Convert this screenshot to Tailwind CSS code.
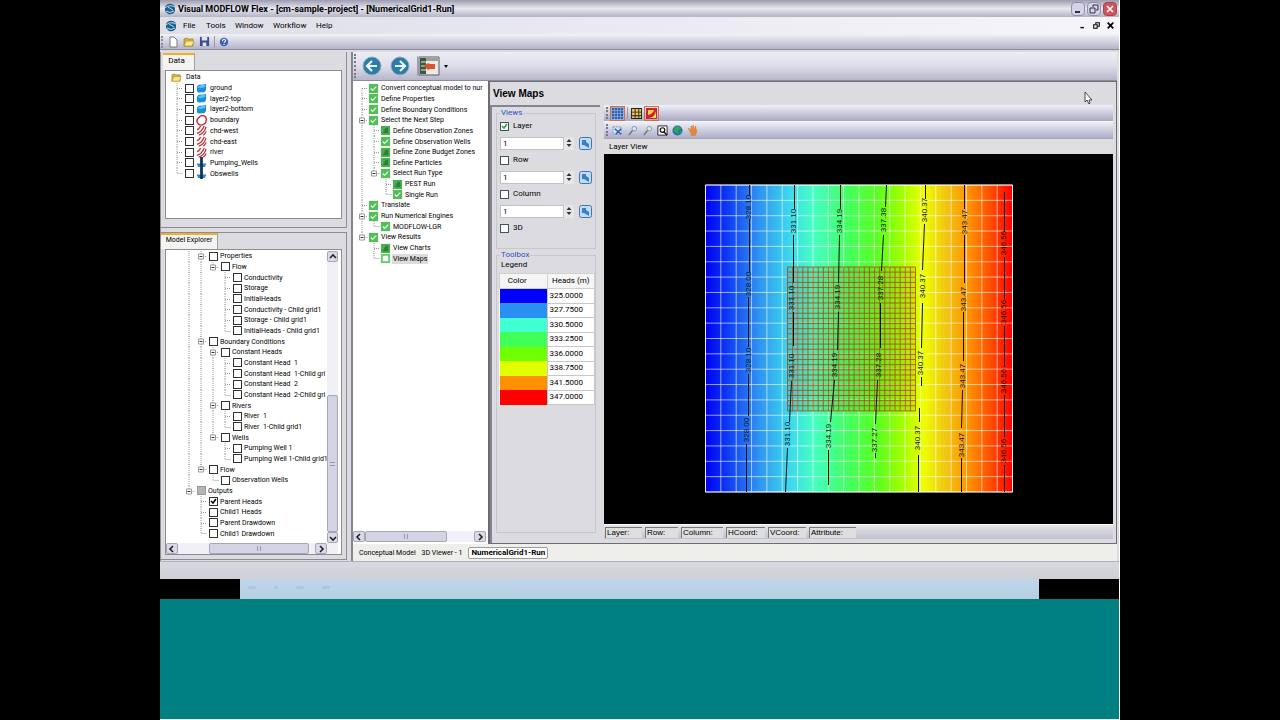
<!DOCTYPE html>
<html lang="en">
<head>
<meta charset="utf-8">
<title>Visual MODFLOW Flex</title>
<script src="https://cdn.jsdelivr.net/npm/@tailwindcss/browser@4"></script>
</head>
<body class="flex min-h-screen flex-col bg-black px-40 font-['Roboto',sans-serif] text-[8px] leading-[10px] text-black">

<svg class="hidden" aria-hidden="true">
  <defs>
    <symbol id="globe" viewBox="0 0 12 12"><path d="M1 4Q3 0 8 1l3 2v5Q9 12 4 11L1 8z" fill="#1d608c"/><path d="M1 5Q5 1 11 4M2 8q4 3 8 0M4 4l5 3" stroke="#b5dcec" fill="none"/></symbol>
    <symbol id="folder" viewBox="0 0 12 12"><path d="M1 3l3-1 1 1h5v7H1z" fill="#dfb33a" stroke="#8a7020" stroke-width=".6"/><path d="M3 5h8L9 10H1z" fill="#ffe984" stroke="#a08530" stroke-width=".6"/></symbol>
    <symbol id="surface" viewBox="0 0 12 12"><path d="M1 4Q3 1 6 2l5-1v6q-1 4-5 3Q2 11 1 9z" fill="#1a8edc"/><path d="M2 4q3-2 8-2v2Q6 6 2 5z" fill="#5cc3f5"/></symbol>
    <symbol id="ring" viewBox="0 0 12 12"><path d="M4 2Q6 0 9 1q3 2 2 5 0 4-5 5-4 0-5-4 0-3 3-5z" fill="#fff" stroke="#c22d35" stroke-width="1.500"/></symbol>
    <symbol id="stripes" viewBox="0 0 12 12"><path d="M1 5q2 0 4-4M1 9q5-1 8-8M3 11q6-2 8-9M8 11q2-1 3-4" fill="none" stroke="#bd3038" stroke-width="1.400"/></symbol>
    <symbol id="well" viewBox="0 0 12 12"><path d="M1 8h10M2 10h8" stroke="#2b8bd0" stroke-width="2"/><path d="M6 0v12" stroke="#16304c" stroke-width="3"/></symbol>
    <symbol id="done" viewBox="0 0 12 12"><path d="M1 1h10v10H1z" fill="#55bd5a"/><path d="M3 6l2 2 4-4" fill="none" stroke="#e2ffe0" stroke-width="1.300"/></symbol>
    <symbol id="todo" viewBox="0 0 12 12"><path d="M1 1h10v10H1z" fill="#4fae54"/><path d="M6 3h3v6H3z" fill="#2a8436"/></symbol>
    <symbol id="current" viewBox="0 0 12 12"><path d="M1 1h10v10H1z" fill="#66c86b"/><path d="M3 3h6v6H3z" fill="#f4fff2"/></symbol>
  </defs>
</svg>

<div class="flex grow flex-col border-r border-white bg-[#dcdce0]">
  <header>
    <div class="flex h-[17px] items-center bg-linear-to-b from-[#9c9cb0] via-[#e8e8f0] to-[#b4b4c6] pr-[2px] pl-1">
      <svg class="size-3"><use href="#globe"/></svg>
      <h1 class="grow pl-[2px] text-[9px] font-bold">Visual MODFLOW Flex - [cm-sample-project] - [NumericalGrid1-Run]</h1>
      <div class="flex gap-[2px]">
        <button aria-label="Minimize" class="flex size-[14px] items-center justify-center rounded-sm border border-[#8f8fae] bg-[#d4d4e6]"><svg viewBox="0 0 10 10" class="size-[10px]"><path d="M2 8h5" stroke="#303048" stroke-width="2"/></svg></button>
        <button aria-label="Restore" class="flex size-[14px] items-center justify-center rounded-sm border border-[#8f8fae] bg-[#d4d4e6]"><svg viewBox="0 0 10 10" class="size-[10px]"><path d="M4 3V1h5v5H7M1 4h5v5H1z" fill="none" stroke="#303048"/></svg></button>
        <button aria-label="Close" class="flex size-[14px] items-center justify-center rounded-sm border border-[#a04850] bg-[#d4545a]"><svg viewBox="0 0 10 10" class="size-[10px]"><path d="M2 2l6 6M8 2L2 8" stroke="#fff" stroke-width="1.600"/></svg></button>
      </div>
    </div>
    <nav class="flex h-[17px] items-center bg-linear-to-r from-[#dedee6] to-[#f6f6fa] pr-1 pl-[5px]">
      <svg class="mr-[6px] size-3"><use href="#globe"/></svg>
      <button class="w-[23px] text-left">File</button><button class="w-[29px] text-left">Tools</button><button class="w-[38px] text-left">Window</button><button class="w-[43px] text-left">Workflow</button><button class="grow text-left">Help</button>
      <button aria-label="Minimize document" class="w-[14px]"><svg viewBox="0 0 10 10" class="size-[7px]"><path d="M2 8h5" stroke="#000" stroke-width="2"/></svg></button>
      <button aria-label="Restore document" class="w-[14px]"><svg viewBox="0 0 10 10" class="size-[7px]"><path d="M4 3V1h5v5H7M1 4h5v5H1z" fill="none" stroke="#000" stroke-width="1.500"/></svg></button>
      <button aria-label="Close document" class="w-[8px]"><svg viewBox="0 0 10 10" class="size-[7px]"><path d="M1 1l8 8M9 1L1 9" stroke="#000" stroke-width="2.400"/></svg></button>
    </nav>
    <div class="flex h-4 items-center gap-[4px] border-b border-[#8c8ca0] bg-linear-to-b from-[#f2f2f8] to-[#b4b4ca] pl-px">
      <span class="h-3 border-l-2 border-dotted border-[#8a8a9c]"></span>
      <button aria-label="New"><svg viewBox="0 0 12 12" class="size-3"><path d="M3 1h4l3 3v7H3z" fill="#fff" stroke="#77778a"/></svg></button>
      <button aria-label="Open"><svg class="size-3"><use href="#folder"/></svg></button>
      <button aria-label="Save"><svg viewBox="0 0 12 12" class="size-[11px]"><path d="M1 1h10v10H1z" fill="#3e4a86"/><path d="M3 1h6v4H3zM4 7h4v4H4z" fill="#dfe5f5"/></svg></button>
      <span class="h-3 border-l border-[#9a9ab0]"></span>
      <button aria-label="Help"><svg viewBox="0 0 12 12" class="size-[10px]"><circle cx="6" cy="6" r="5" fill="#3c62b8"/><path d="M4 5q0-2 2-2t2 1.500q0 1-2 2M6 8v1.500" fill="none" stroke="#fff" stroke-width="1.300"/></svg></button>
    </div>
  </header>

  <main class="flex gap-1 border-b border-[#b0b0b4] pt-[2px]">
    <div class="flex w-[187px] shrink-0 flex-col gap-1 border-l border-[#8a8a90]">
      <section class="border-r border-b border-[#8c8c96]">
        <h2 class="flex h-[18px] pt-px"><button class="ml-[2px] w-[32px] border-t-2 border-r border-t-[#efb02c] border-r-[#a0a0a8] bg-[#f3f3f1] pr-1 pb-1">Data</button></h2>
        <div class="mx-1 mb-2 h-[149px] border border-[#8c8c94] bg-white pt-px pl-[5px] text-[7px]" id="data-tree"></div>
      </section>
      <section class="border-t border-r border-b border-[#8c8c96]">
        <h2 class="flex h-4"><button class="w-[57px] border-t-2 border-r border-t-[#efb02c] border-r-[#a0a0a8] bg-[#f3f3f1] pb-1 text-[7px] whitespace-nowrap">Model Explorer</button></h2>
        <div class="mx-1 mb-1 border border-[#8c8c94] bg-white pt-px pr-[3px]">
          <div class="flex">
            <div class="min-w-0 grow overflow-hidden pb-[4px] pl-[17px] text-[7px]" id="model-tree"></div>
            <div class="flex w-[11px] shrink-0 flex-col bg-[#f0f0f6]">
              <button aria-label="Scroll up" class="flex h-[11px] items-center justify-center rounded-xs border border-[#a6a6ba] bg-[#d9d9e8]"><svg viewBox="0 0 8 8" class="size-2"><path d="M1 5l3-3 3 3" fill="none" stroke="#222" stroke-width="1.600"/></svg></button>
              <div class="h-[133px]"></div>
              <div class="flex grow items-center justify-center rounded-xs border border-[#a6a6ba] bg-[#d3d3e4]"><span class="h-1 w-[5px] border-y border-[#9898b0]"></span></div>
              <button aria-label="Scroll down" class="flex h-[11px] items-center justify-center rounded-xs border border-[#a6a6ba] bg-[#d9d9e8]"><svg viewBox="0 0 8 8" class="size-2"><path d="M1 3l3 3 3-3" fill="none" stroke="#222" stroke-width="1.600"/></svg></button>
            </div>
          </div>
          <div class="flex h-[11px] bg-[#f0f0f6] pr-[11px]">
            <button aria-label="Scroll left" class="flex w-[12px] items-center justify-center rounded-xs border border-[#a6a6ba] bg-[#d9d9e8]"><svg viewBox="0 0 8 8" class="size-2"><path d="M5 1L2 4l3 3" fill="none" stroke="#222" stroke-width="1.600"/></svg></button>
            <div class="w-[31px]"></div>
            <div class="flex w-[100px] items-center justify-center rounded-xs border border-[#a6a6ba] bg-[#d3d3e4]"><span class="h-[5px] w-1 border-x border-[#9898b0]"></span></div>
            <div class="grow"></div>
            <button aria-label="Scroll right" class="flex w-[12px] items-center justify-center rounded-xs border border-[#a6a6ba] bg-[#d9d9e8]"><svg viewBox="0 0 8 8" class="size-2"><path d="M3 1l3 3-3 3" fill="none" stroke="#222" stroke-width="1.600"/></svg></button>
          </div>
        </div>
      </section>
    </div>

    <div class="flex min-w-0 grow flex-col border-l-2 border-[#85858f] pr-[2px]">
      <div class="flex h-[29px] items-center border-b border-[#8c8c9e] bg-linear-to-b from-[#ededf5] via-[#dedeea] to-[#b6b6ca] pl-px">
        <span class="h-6 border-l-2 border-dotted border-[#77778a]"></span>
        <button aria-label="Back" class="ml-[6px]"><svg viewBox="0 0 20 20" class="size-5"><circle cx="10" cy="10" r="9" fill="#2e7ba6" stroke="#8faebf"/><path d="M15 10H6M10 5l-5 5 5 5" fill="none" stroke="#e8f8ff" stroke-width="2.200"/></svg></button>
        <button aria-label="Forward" class="ml-[8px]"><svg viewBox="0 0 20 20" class="size-5"><circle cx="10" cy="10" r="9" fill="#2e7ba6" stroke="#8faebf"/><path d="M5 10h9M10 5l5 5-5 5" fill="none" stroke="#e8f8ff" stroke-width="2.200"/></svg></button>
        <button aria-label="Workflow view" class="ml-[7px] border-l border-[#a0a0b4]"><svg viewBox="0 0 22 20" class="h-5 w-[22px]"><path d="M1 1h20v18H1z" fill="#ecebe8" stroke="#5a5a60"/><path d="M2 2h6v16H2z" fill="#46504a"/><path d="M8 2h12v3H8z" fill="#9aa0a0"/><path d="M3 6h5M3 10h5M3 14h5" stroke="#8ed08c" stroke-width="1.500"/><path d="M6 10l4-3 2 1h5v5h-5l-2 1z" fill="#dd5330"/></svg></button>
        <span class="ml-[4px] border-x-2 border-t-[3px] border-x-transparent border-t-black"></span>
      </div>

      <div class="flex">
        <aside class="flex w-[135px] shrink-0 flex-col bg-white pr-[2px]">
          <div class="grow overflow-hidden pt-[2px] pl-[3px] text-[7px]" id="steps-tree"></div>
          <div class="flex h-[11px] bg-[#f0f0f6]">
            <button aria-label="Scroll left" class="flex w-[12px] items-center justify-center rounded-xs border border-[#a6a6ba] bg-[#d9d9e8]"><svg viewBox="0 0 8 8" class="size-2"><path d="M5 1L2 4l3 3" fill="none" stroke="#222" stroke-width="1.600"/></svg></button>
            <div class="flex w-[82px] items-center justify-center rounded-xs border border-[#a6a6ba] bg-[#d3d3e4]"><span class="h-[5px] w-1 border-x border-[#9898b0]"></span></div>
            <div class="grow"></div>
            <button aria-label="Scroll right" class="flex w-[12px] items-center justify-center rounded-xs border border-[#a6a6ba] bg-[#d9d9e8]"><svg viewBox="0 0 8 8" class="size-2"><path d="M3 1l3 3-3 3" fill="none" stroke="#222" stroke-width="1.600"/></svg></button>
          </div>
          <div class="h-[2px]"></div>
        </aside>

        <section class="flex min-w-0 grow flex-col border-t border-r border-b border-l-2 border-[#6c6c74] pr-[3px]">
          <h2 class="h-[23px] pt-[7px] pl-[3px] font-['Liberation_Sans',Arial,sans-serif] text-[10px] font-bold">View Maps</h2>
          <div class="flex grow gap-1">
            <div class="w-[110px] shrink-0 border-t-2 border-l-2 border-[#85858f] pt-px pr-1 pl-1">
              <fieldset class="h-[141px] min-w-0 border border-[#c6c6cc] px-[3px] leading-[10px]" id="views">
                <legend class="px-px text-[#2c50c0]">Views</legend>
              </fieldset>
              <fieldset class="mt-px h-[283px] min-w-0 border border-[#c6c6cc] pl-[2px]">
                <legend class="ml-px px-px text-[#2c50c0]">Toolbox</legend>
                <p class="pl-[2px]">Legend</p>
                <table class="mt-[3px] h-[132px] w-full border-collapse bg-white">
                  <thead><tr class="h-[15px] bg-[#f5f5f5]"><th class="w-1/2 border border-[#d0d0d4] p-0 pr-3 font-normal">Color</th><th class="border border-[#d0d0d4] p-0 font-normal whitespace-nowrap">Heads (m)</th></tr></thead>
                  <tbody id="legend"></tbody>
                </table>
              </fieldset>
            </div>
            <div class="flex min-w-0 grow flex-col">
              <div class="flex h-4 items-center bg-linear-to-b from-[#f0f0f8] to-[#a9a9c4] pl-[2px]">
                <span class="h-3 border-l-2 border-dotted border-[#77778a]"></span>
                <button aria-label="Show grid" class="ml-[2px] border border-[#cc7346] bg-[#9cabd0] p-px"><svg viewBox="0 0 11 11" class="size-[11px]"><path d="M0 0h11v11H0z" fill="#2f5fae"/><path d="M2.500 0v11M5.500 0v11M8.500 0v11M0 2.500h11M0 5.500h11M0 8.500h11" stroke="#8fb2e6" stroke-width=".7"/></svg></button>
                <span class="ml-[2px] h-3 border-l border-[#9a9ab0]"></span>
                <button aria-label="Show cells" class="ml-[3px]"><svg viewBox="0 0 12 12" class="size-[11px]"><path d="M0 0h12v12H0z" fill="#29241a"/><path d="M1 1h3v3H1zM5 1h3v3H5zM9 1h2v3H9zM1 5h3v3H1zM5 5h3v3H5zM9 5h2v3H9zM1 9h3v2H1zM5 9h3v2H5zM9 9h2v2H9z" fill="#eac35a"/></svg></button>
                <button aria-label="Colour map" class="ml-[2px] border border-[#cc7346] p-px"><svg viewBox="0 0 11 11" class="size-[11px]"><path d="M0 0h11v11H0z" fill="#d02038"/><path d="M2 2h6Q7 6 2 7z" fill="#f7d83c"/><path d="M3 10Q9 9 10 3v7z" fill="#f7e23c"/></svg></button>
              </div>
              <div class="flex h-[17px] items-center gap-[4px] border-t border-[#f6f6fa] bg-linear-to-b from-[#f0f0f8] to-[#adadc8] pl-[2px]">
                <span class="h-3 border-l-2 border-dotted border-[#77778a]"></span>
                <button aria-label="Zoom box"><svg viewBox="0 0 12 12" class="size-[11px]"><path d="M1 2h9v8H1z" fill="#d3e2f4" stroke="#7c94b8" stroke-dasharray="2 1"/><path d="M3 4l7 6M10 4l-6 6" stroke="#245ba6" stroke-width="1.500"/></svg></button>
                <button aria-label="Zoom in"><svg viewBox="0 0 12 12" class="size-[11px]"><circle cx="8" cy="4" r="2.500" fill="#d6e6f5" stroke="#7d93b0"/><path d="M6 6l-4 5" stroke="#7b6d64" stroke-width="1.500"/></svg></button>
                <button aria-label="Zoom out"><svg viewBox="0 0 12 12" class="size-[11px]"><circle cx="8" cy="4" r="2.500" fill="#d4efd8" stroke="#7d9aa0"/><path d="M6 6l-4 5" stroke="#7b6d64" stroke-width="1.500"/></svg></button>
                <button aria-label="Zoom extents"><svg viewBox="0 0 12 12" class="size-[11px]"><path d="M1 1h10v10H1z" fill="#fff" stroke="#222"/><circle cx="6" cy="5.500" r="2.500" fill="none" stroke="#111" stroke-width="1.300"/><path d="M7 7l4 4" stroke="#111" stroke-width="1.600"/></svg></button>
                <button aria-label="Full view"><svg viewBox="0 0 12 12" class="size-[11px]"><circle cx="6" cy="6" r="5.500" fill="#256fa8"/><path d="M3 2l4-1 3 3-3 2v4L2 7zM8 7l3-1-2 4z" fill="#2fa65a"/></svg></button>
                <button aria-label="Pan"><svg viewBox="0 0 12 12" class="size-[11px]"><path d="M3 7L1 4l1-1 2 2V1h1.500v3L6 0h1.500v4L9 1h1v4l1-1v4l-2 4H5z" fill="#dd8741"/></svg></button>
              </div>
              <h3 class="flex h-4 items-center border-t border-[#a8a8ac] bg-[#dedee0] pl-[5px]">Layer View</h3>
              <div class="grow bg-black"><svg id="map" viewBox="604 154 508 370" class="h-[370px] w-full"></svg></div>
              <div class="flex h-[15px] items-center gap-[3px] border-t border-white bg-linear-to-b from-[#e4e4ea] to-[#c2c2d0] pl-px font-['Liberation_Sans',Arial,sans-serif] whitespace-nowrap">
                <span class="w-[37px] border-t border-l border-[#77777c] bg-[#dededf] pl-px">Layer:</span>
                <span class="w-[33px] border-t border-l border-[#77777c] bg-[#dededf] pl-px">Row:</span>
                <span class="w-[42px] border-t border-l border-[#77777c] bg-[#dededf] pl-px">Column:</span>
                <span class="w-[39px] border-t border-l border-[#77777c] bg-[#dededf] pl-px">HCoord:</span>
                <span class="w-[38px] border-t border-l border-[#77777c] bg-[#dededf] pl-px">VCoord:</span>
                <span class="w-[47px] border-t border-l border-[#77777c] bg-[#dededf] pl-px">Attribute:</span>
              </div>
              <div class="h-1"></div>
            </div>
          </div>
        </section>
      </div>

      <div class="flex h-[17px] items-center gap-[6px] bg-[#eeeeea] pl-[6px] text-[7px]">
        <button>Conceptual Model</button><button>3D Viewer - 1</button><button class="rounded-xs border border-[#9c9ca0] bg-white px-[2px] text-[8px] font-bold">NumericalGrid1-Run</button>
      </div>
    </div>
  </main>

  <footer class="h-[17px] bg-linear-to-b from-[#d8d8e0] to-[#cfcfd6]"></footer>
  <div class="h-5 bg-black px-20"><div class="flex h-5 items-center gap-[18px] bg-linear-to-b from-[#bfd6ee] to-[#b4cfdf] pb-1 pl-2"><span class="h-[3px] w-2 rounded-full bg-[#adc6dc]"></span><span class="h-[3px] w-1 rounded-full bg-[#adc6dc]"></span><span class="h-[3px] w-2 rounded-full bg-[#adc6dc]"></span><span class="h-[3px] w-2 rounded-full bg-[#adc6dc]"></span></div></div>
  <div class="grow border-b border-white bg-[#008080]"></div>
</div>

<svg viewBox="0 0 8 13" class="absolute top-[91px] left-[1084px] h-[13px] w-2"><path d="M1 1v10l2-2 2 4 1-1-1-3h3z" fill="#fff" stroke="#222" stroke-width=".8"/></svg>

<script>
// Guide codes: "|" line, "T" branch, "F" first branch, "L" last branch, "-" node, "=" last node
const guide = {
  ' ': '', '|': 'M6 0V11', 'T': 'M6 0V11M6 5.5H12', 'L': 'M6 0V5.5H12', 'F': 'M6 5.5V11M6 5.5H12',
  '-': 'M6 0V11M6 5.5H12', '=': 'M6 0V5.5H12'
};
const cell = c => `<svg viewBox="0 0 12 11" class="h-[11px] w-3 shrink-0"><path d="${guide[c]}" fill="none" stroke="#9a9a9a" stroke-dasharray="1 1"/>${c === '-' || c === '=' ? '<path d="M3.500 3h5v5h-5z" fill="#fff" stroke="#999"/><path d="M4.500 5.500h3" stroke="#333"/>' : ''}</svg>`;
const tick = `<svg viewBox="0 0 9 9" class="pointer-events-none absolute inset-0 hidden size-[9px] peer-checked:block"><path d="M2 4l2 2 3-4" fill="none" stroke="currentColor" stroke-width="1.500"/></svg>`;
const box = (state, name) => `<span class="relative mx-[2px] size-[9px] shrink-0"><input type="checkbox" aria-label="${name}" ${state === 'on' ? 'checked' : ''} class="peer block size-[9px] appearance-none border ${state === 'gray' ? 'border-[#999] bg-[#b4b4b4]' : 'border-[#333] bg-white'}">${tick}</span>`;
const icon = id => `<svg class="size-[11px] shrink-0"><use href="#${id}"/></svg>`;
const row = inner => `<li class="flex items-center whitespace-nowrap">${inner}</li>`;

document.getElementById('data-tree').innerHTML = `<ul class="grid h-[107px] auto-rows-fr">` +
  row(`${icon('folder')}<span class="ml-[4px]">Data</span>`) +
  [['surface','ground'],['surface','layer2-top'],['surface','layer2-bottom'],['ring','boundary'],['stripes','chd-west'],['stripes','chd-east'],['stripes','river'],['well','Pumping_Wells'],['well','Obswells']]
    .map(([i, t], n) => row(`${cell(n === 8 ? 'L' : 'T')}${box('', t)}${icon(i)}<span class="ml-[3px]">${t}</span>`)).join('') + '</ul>';

document.getElementById('model-tree').innerHTML = `<ul class="grid h-[288px] auto-rows-fr">` + [
  ['|-','Properties'],['||=','Flow'],['|| T','Conductivity'],['|| T','Storage'],['|| T','InitialHeads'],['|| T','Conductivity - Child grid1'],['|| T','Storage - Child grid1'],['|| L','InitialHeads - Child grid1'],
  ['|-','Boundary Conditions'],['||-','Constant Heads'],['|||T','Constant Head&nbsp; 1'],['|||T','Constant Head&nbsp; 1-Child gri'],['|||T','Constant Head&nbsp; 2'],['|||L','Constant Head&nbsp; 2-Child gri'],
  ['||-','Rivers'],['|||T','River&nbsp; 1'],['|||L','River&nbsp; 1-Child grid1'],['||=','Wells'],['|| T','Pumping Well 1'],['|| L','Pumping Well 1-Child grid1'],
  ['|=','Flow'],['| L','Observation Wells'],['=','Outputs','gray'],[' T','Parent Heads','on'],[' T','Child1 Heads'],[' T','Parent Drawdown'],[' L','Child1 Drawdown']
].map(([g, t, s]) => row([...g].map(cell).join('') + box(s, t) + `<span>${t}</span>`)).join('') + '</ul>';

document.getElementById('steps-tree').innerHTML = `<ul class="grid h-[181px] auto-rows-fr">` + [
  ['F','done','Convert conceptual model to nur'],['T','done','Define Properties'],['T','done','Define Boundary Conditions'],['-','done','Select the Next Step'],
  ['|T','todo','Define Observation Zones'],['|T','done','Define Observation Wells'],['|T','todo','Define Zone Budget Zones'],['|T','todo','Define Particles'],['|=','done','Select Run Type'],
  ['| T','todo','PEST Run'],['| L','done','Single Run'],['T','done','Translate'],['-','done','Run Numerical Engines'],['|L','done','MODFLOW-LGR'],['=','done','View Results'],[' T','todo','View Charts'],[' L','current','View Maps']
].map(([g, i, t]) => row([...g].map(cell).join('') + icon(i) + `<span class="ml-px px-px ${t === 'View Maps' ? 'bg-[#dcdcdc]' : ''}">${t}</span>`)).join('') + '</ul>';

document.getElementById('views').insertAdjacentHTML('beforeend', ['Layer','Row','Column','3D'].map((t, n) => `
  <div class="${n < 3 ? 'h-[34px]' : ''}">
    <label class="flex h-[16px] items-center gap-[4px]"><span class="relative size-[9px] text-[#2f9a3c]"><input type="checkbox" ${n ? '' : 'checked'} class="peer block size-[9px] appearance-none border border-[#44545c] bg-white">${tick}</span>${t}</label>
    ${n < 3 ? `<div class="flex h-[18px] items-center"><input type="text" aria-label="${t} number" value="1" class="h-[13px] w-full min-w-0 border border-[#c0c0c8] bg-white px-[2px]"><button aria-label="Step ${t}" class="flex h-[13px] w-[10px] shrink-0 items-center justify-center bg-[#e6e6e8]"><svg viewBox="0 0 8 12" class="h-3 w-2"><path d="M1.500 5L4 2l2.500 3zM1.500 7L4 10l2.500-3z" fill="#333"/></svg></button><button aria-label="Apply ${t}" class="ml-[5px] shrink-0"><svg viewBox="0 0 13 13" class="size-[13px]"><rect x=".5" y=".5" width="12" height="12" rx="2" fill="#c3dcf3" stroke="#3f75b8"/><path d="M3 3h4v2l3 2v4L5 8H3z" fill="#3b7fc4"/></svg></button></div>` : ''}
  </div>`).join(''));

document.getElementById('legend').innerHTML = [['#0000ff','325.0000'],['#2890f0','327.7500'],['#40ffd0','330.5000'],['#40ff58','333.2500'],['#70ff00','336.0000'],['#e0ff00','338.7500'],['#ff9000','341.5000'],['#ff0000','347.0000']]
  .map(([c, v]) => `<tr><td style="background:${c}"></td><td class="border border-[#c8c8cc] px-[2px] py-0">${v}</td></tr>`).join('');

// Head contours over parent and child grids
const lines = (n, f) => Array.from({ length: n + 1 }, (_, i) => f(i)).join('');
const parent = lines(20, i => `M${705 + i * 15.35} 185V492M705 ${185 + i * 15.35}H1012`);
const child = lines(25, i => `M${787 + i * 5.12} 267V411`) + lines(28, i => `M787 ${267 + i * 5.14}H915`);
const labels = [
  [748,207,'328.10'],[748,284,'328.00'],[748,360,'328.10'],[746,430,'328.00'],
  [793,221,'331.10'],[791,298,'331.10'],[791,366,'331.10'],[787,434,'331.10'],
  [839,221,'334.19'],[837,297,'334.19'],[834,365,'334.19'],[828,436,'334.19'],
  [883,220,'337.38'],[880,288,'337.28'],[878,365,'337.28'],[874,440,'337.27'],
  [924,210,'340.37'],[922,286,'340.37'],[920,363,'340.37'],[917,438,'340.37'],
  [964,222,'343.47'],[963,299,'343.47'],[962,376,'343.47'],[961,445,'343.47'],
  [1003,243,'346.56'],[1003,312,'346.56'],[1003,381,'346.56'],[1003,451,'346.56']
];
document.getElementById('map').innerHTML = `
  <defs><linearGradient id="heads">
    <stop offset="0" stop-color="#0000f0"/><stop offset=".06" stop-color="#0a30f5"/><stop offset=".17" stop-color="#2f90f0"/><stop offset=".27" stop-color="#3bd6ee"/><stop offset=".35" stop-color="#45ffc5"/><stop offset=".46" stop-color="#43ff62"/><stop offset=".56" stop-color="#5aff20"/><stop offset=".64" stop-color="#a0ff00"/><stop offset=".71" stop-color="#efff00"/><stop offset=".78" stop-color="#f0c810"/><stop offset=".86" stop-color="#ff9000"/><stop offset=".93" stop-color="#ff4c00"/><stop offset="1" stop-color="#ff0000"/>
  </linearGradient></defs>
  <rect x="705" y="185" width="307" height="307" fill="url(#heads)"/>
  <path d="${parent}" stroke="#fff" stroke-opacity=".6" fill="none"/>
  <rect x="787" y="267" width="128" height="144" fill="#806000" fill-opacity=".12"/>
  <path d="${child}" stroke="#b84010" stroke-opacity=".8" fill="none"/>
  <path d="M705 185h307v307H705z" fill="none" stroke="#fff" stroke-opacity=".8"/>
  <path d="M749 185v10M749 219v53M748 297v50M748 374v42M746 444v48M794 185v24M793 235v48M793 312v34M791 381l-2 41M787 448l-2 44M840 185v24M839 235l-1 48M838 312l-1 38M834 380l-4 42M828 450v35M886 185l-1 22M883 235l-2 36M880 303v45M877 380l-2 44M875 453v5M925 185v14M924 224l-2 46M922 303l-1 45M921 377v9M919 408v14M918 455v37M964 185v24M964 235v48M963 312v49M962 390l-1 38M961 458v34M1004 192v40M1004 257v42M1004 326v41M1004 395v42M1004 465v27" fill="none" stroke="#111"/>
  <g fill="#111" font-family="Liberation Sans, Arial, sans-serif" font-size="8" text-anchor="middle">${labels.map(([x, y, t]) => `<text transform="translate(${x + 2} ${y}) rotate(-90)">${t}</text>`).join('')}</g>`;
</script>
</body>
</html>
